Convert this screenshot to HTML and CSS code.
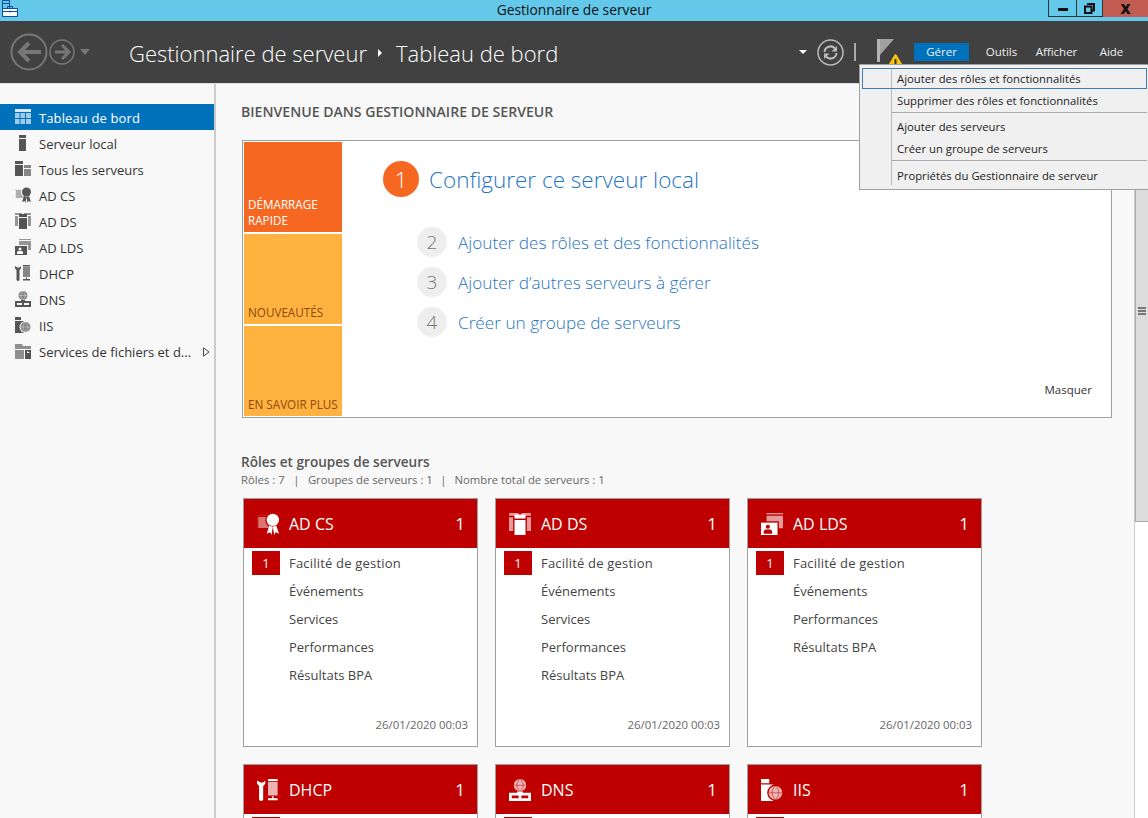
FILE: index.html
```html
<!DOCTYPE html>
<html>

<head>
    <meta charset="UTF-8" />
    <title>Gestionnaire de serveur</title>
    <link rel="stylesheet" href="styles.css">
</head>

<body>
    <svg class="defs" width="0" height="0">
        <symbol id="i-dash" viewBox="0 0 16 16">
            <path d="M0 0h16v3H0z" />
            <path opacity=".75" d="M0 4h4.500v5H0zM5.500 4H10v5H5.500zM11 4h5v5h-5zM0 10h4.500v5H0zM5.500 10H10v5H5.500zM11 10h5v5h-5z" />
        </symbol>
        <symbol id="i-local" viewBox="0 0 16 16">
            <path d="M4 0h7v3H4zM4 4h7v12H4z" />
        </symbol>
        <symbol id="i-all" viewBox="0 0 16 16">
            <path d="M0 0h8v3H0zM0 4h8v11H0z" />
            <path opacity=".7" d="M9 4h7v3H9zM9 8h7v7H9z" />
        </symbol>
        <symbol id="i-adcs" viewBox="0 0 16 16">
            <path opacity=".45" d="M0 2h9v9H0z" />
            <path class="cut-line" d="M.5 2.500h9v9h-9z" />
            <circle class="cut" cx="11.500" cy="5" r="5.500" />
            <circle cx="11.500" cy="5" r="4.500" />
            <path d="M9 9l-2 6 2.500-1 1 2 1-6zM14 9l2 6-2.500-1-1 2-1-6z" />
        </symbol>
        <symbol id="i-adds" viewBox="0 0 16 16">
            <path opacity=".6" d="M0 0h7v2H0zM9 0h7v2H9zM0 3h3v10H0zM13 3h3v10h-3z" />
            <path d="M4 1h8v3H4zM4 5h8v11H4z" />
        </symbol>
        <symbol id="i-adlds" viewBox="0 0 16 16">
            <path opacity=".6" d="M4 2h12v9h-3V6H4z" />
            <path d="M4 0h12v1H4z" opacity=".6" />
            <path d="M0 7h12v9H0z" />
            <circle class="cut" cx="5" cy="10" r="1.500" />
            <path class="cut" d="M2 15v-2l1-1h4l1 1v2z" />
        </symbol>
        <symbol id="i-dhcp" viewBox="0 0 16 16">
            <path d="M0 1v2.500l1.500 1.500V15l1 1h1l1-1V5L6 3.500V1L4.500 2.500h-2z" />
            <path opacity=".7" d="M8 2h7v10H8z" />
            <path d="M8 0h7v1.500H8zM11 12.500h1V14h3v1.500H8V14h3z" />
        </symbol>
        <symbol id="i-dns" viewBox="0 0 16 16">
            <circle opacity=".7" cx="8" cy="4.500" r="4.500" />
            <path class="globe-line" d="M3.500 4.500h9M8 0c-3 2.500-3 6.500 0 9M8 0c3 2.500 3 6.500 0 9" />
            <path d="M6 9h4v1H6zM0 10h16v6H0z" />
            <path class="cut" d="M2 12h5v2H2zM9 12h5v2H9z" />
        </symbol>
        <symbol id="i-iis" viewBox="0 0 16 16">
            <path d="M0 0h6v3H0zM0 4h9v12H0z" />
            <circle class="cut" cx="10.500" cy="10" r="6" />
            <circle opacity=".7" cx="10.500" cy="10" r="5" />
            <path class="globe-line" d="M5.500 10h10M10.500 5c-3.200 3-3.200 7 0 10M10.500 5c3.200 3 3.200 7 0 10" />
        </symbol>
        <symbol id="i-files" viewBox="0 0 16 16">
            <path opacity=".65" d="M0 1h7l1 2h8v3H0zM0 7h9v9H0z" />
            <path d="M10 7h6v9h-6zM12 8v2h3z" />
        </symbol>
    </svg>

    <div class="titlebar">
        <div class="app-icon">
            <svg width="17" height="17" viewBox="0 0 17 17">
                <path d="M1.500.500h7v11h-7z" fill="#63c8ea" stroke="#0b4f9e" />
                <path d="M2 3.500h6" stroke="#0b4f9e" />
                <path d="M1.500 8.500h15v8h-15z" fill="#fff" stroke="#0b4f9e" />
                <path d="M6.500 8V6.500h5V8M2 11.500h14M9 10.500v2" fill="none" stroke="#0b4f9e" />
            </svg>
        </div>
        <div class="title">Gestionnaire de serveur</div>
        <div class="win-btns">
            <div class="win-btn win-min"><span></span></div>
            <div class="win-btn win-max">
                <svg width="11" height="11" viewBox="0 0 11 11">
                    <path d="M3 1h7v6.500H8M1 3.500h6.500V10H1z" fill="none" stroke="#111" stroke-width="2" />
                </svg>
            </div>
            <div class="win-btn win-close">X</div>
        </div>
    </div>

    <div class="toolbar">
        <div class="nav-btns">
            <svg class="nav-back" width="38" height="38" viewBox="0 0 38 38">
                <circle cx="19" cy="19" r="17.500" fill="none" stroke="#777" stroke-width="2" />
                <path d="M9 19h22M19 10l-9 9 9 9" fill="none" stroke="#777" stroke-width="4" />
            </svg>
            <svg class="nav-fwd" width="26" height="26" viewBox="0 0 26 26">
                <circle cx="13" cy="13" r="12" fill="none" stroke="#777" stroke-width="1.500" />
                <path d="M20 13H6M13 6l7 7-7 7" fill="none" stroke="#777" stroke-width="3" />
            </svg>
            <span class="caret caret-grey"></span>
        </div>
        <div class="crumbs">
            <span>Gestionnaire de serveur</span>
            <span class="crumb-sep"></span>
            <span>Tableau de bord</span>
        </div>
        <div class="tools">
            <span class="caret caret-white"></span>
            <svg class="refresh" width="27" height="27" viewBox="0 0 27 27">
                <circle cx="13.500" cy="13.500" r="12.500" fill="none" stroke="#bbb" stroke-width="1.500" />
                <g id="refresh-arc" fill="#bbb">
                    <path d="M7.500 13a6 6 0 0 1 10.500-3.500" fill="none" stroke="#bbb" stroke-width="2" />
                    <path d="M20 7v5.500h-5.500z" />
                </g>
                <use href="#refresh-arc" transform="rotate(180 13.500 13.500)" />
            </svg>
            <span class="tool-sep"></span>
            <svg class="flag" width="28" height="30" viewBox="0 0 28 30">
                <path d="M1 1h3v23H1z" fill="#b4b4b4" />
                <path d="M4 1h14L4 17z" fill="#a0a0a0" />
                <path d="M19.500 17l6 10h-12z" fill="#f9c10e" stroke="#f9c10e" stroke-width="2" stroke-linejoin="round" />
                <path d="M18.500 21h2v5h-2z" fill="#333" />
            </svg>
            <div class="menu-item is-active">Gérer</div>
            <div class="menu-item">Outils</div>
            <div class="menu-item">Afficher</div>
            <div class="menu-item">Aide</div>
        </div>
    </div>

    <div class="main">
        <div class="sidebar">
            <div class="side-item is-active"><svg class="side-icon"><use href="#i-dash" /></svg>Tableau de bord</div>
            <div class="side-item"><svg class="side-icon"><use href="#i-local" /></svg>Serveur local</div>
            <div class="side-item"><svg class="side-icon"><use href="#i-all" /></svg>Tous les serveurs</div>
            <div class="side-item"><svg class="side-icon"><use href="#i-adcs" /></svg>AD CS</div>
            <div class="side-item"><svg class="side-icon"><use href="#i-adds" /></svg>AD DS</div>
            <div class="side-item"><svg class="side-icon"><use href="#i-adlds" /></svg>AD LDS</div>
            <div class="side-item"><svg class="side-icon"><use href="#i-dhcp" /></svg>DHCP</div>
            <div class="side-item"><svg class="side-icon"><use href="#i-dns" /></svg>DNS</div>
            <div class="side-item"><svg class="side-icon"><use href="#i-iis" /></svg>IIS</div>
            <div class="side-item"><svg class="side-icon"><use href="#i-files" /></svg>Services de fichiers et d...
                <svg class="side-arrow" width="7" height="10" viewBox="0 0 7 10">
                    <path d="M.5 .8v8.400L6 5z" fill="none" stroke="#444" />
                </svg>
            </div>
        </div>

        <div class="content">
            <h1 class="welcome">BIENVENUE DANS GESTIONNAIRE DE SERVEUR</h1>

            <div class="start-panel">
                <div class="tiles">
                    <div class="tile tile-orange">DÉMARRAGE<br />RAPIDE</div>
                    <div class="tile tile-amber">NOUVEAUTÉS</div>
                    <div class="tile tile-amber">EN SAVOIR PLUS</div>
                </div>
                <div class="steps">
                    <div class="step-main"><span class="step-num">1</span>Configurer ce serveur local</div>
                    <div class="step-list">
                        <div class="step"><span class="step-num">2</span>Ajouter des rôles et des fonctionnalités</div>
                        <div class="step"><span class="step-num">3</span>Ajouter d’autres serveurs à gérer</div>
                        <div class="step"><span class="step-num">4</span>Créer un groupe de serveurs</div>
                    </div>
                    <div class="hide-link">Masquer</div>
                </div>
            </div>

            <div class="roles-title">Rôles et groupes de serveurs</div>
            <div class="roles-sub">
                <span>Rôles : 7</span><i>|</i><span>Groupes de serveurs : 1</span><i>|</i><span>Nombre total de serveurs : 1</span>
            </div>

            <div class="cards">
                <div class="card">
                    <div class="card-head"><svg class="card-icon"><use href="#i-adcs" /></svg><span>AD CS</span><b>1</b></div>
                    <div class="card-row"><em>1</em>Facilité de gestion</div>
                    <div class="card-row">Événements</div>
                    <div class="card-row">Services</div>
                    <div class="card-row">Performances</div>
                    <div class="card-row">Résultats BPA</div>
                    <div class="card-date">26/01/2020 00:03</div>
                </div>
                <div class="card">
                    <div class="card-head"><svg class="card-icon"><use href="#i-adds" /></svg><span>AD DS</span><b>1</b></div>
                    <div class="card-row"><em>1</em>Facilité de gestion</div>
                    <div class="card-row">Événements</div>
                    <div class="card-row">Services</div>
                    <div class="card-row">Performances</div>
                    <div class="card-row">Résultats BPA</div>
                    <div class="card-date">26/01/2020 00:03</div>
                </div>
                <div class="card">
                    <div class="card-head"><svg class="card-icon"><use href="#i-adlds" /></svg><span>AD LDS</span><b>1</b></div>
                    <div class="card-row"><em>1</em>Facilité de gestion</div>
                    <div class="card-row">Événements</div>
                    <div class="card-row">Performances</div>
                    <div class="card-row">Résultats BPA</div>
                    <div class="card-date">26/01/2020 00:03</div>
                </div>
                <div class="card">
                    <div class="card-head"><svg class="card-icon"><use href="#i-dhcp" /></svg><span>DHCP</span><b>1</b></div>
                    <div class="card-row"><em></em></div>
                </div>
                <div class="card">
                    <div class="card-head"><svg class="card-icon"><use href="#i-dns" /></svg><span>DNS</span><b>1</b></div>
                    <div class="card-row"><em></em></div>
                </div>
                <div class="card">
                    <div class="card-head"><svg class="card-icon"><use href="#i-iis" /></svg><span>IIS</span><b>1</b></div>
                    <div class="card-row"><em></em></div>
                </div>
            </div>
        </div>

        <div class="scrollbar">
            <div class="thumb"><span class="grip"></span></div>
        </div>
    </div>

    <div class="dropdown">
        <div class="drop-item is-focus">Ajouter des rôles et fonctionnalités</div>
        <div class="drop-item">Supprimer des rôles et fonctionnalités</div>
        <div class="drop-line"></div>
        <div class="drop-item">Ajouter des serveurs</div>
        <div class="drop-item">Créer un groupe de serveurs</div>
        <div class="drop-line drop-line-last"></div>
        <div class="drop-item">Propriétés du Gestionnaire de serveur</div>
    </div>
</body>

</html>
```
FILE: styles.css
```css
* {
    box-sizing: border-box;
}

html, body {
    margin: 0;
    height: 818px;
    overflow: hidden;
}

body {
    font-family: "Open Sans", "Noto Sans", sans-serif;
    font-size: 13px;
    color: #333;
    background-color: #f8f8f8;
}

.defs {
    position: absolute;
}

/* title bar */
.titlebar {
    display: grid;
    grid-template-columns: 1fr auto 1fr;
    height: 21px;
    background-color: #63c8ea;
}

.app-icon {
    height: 17px;
    padding-left: 1px;
}

.title {
    font-size: 13.800px;
    line-height: 19px;
    color: #111;
}

.win-btns {
    display: flex;
    justify-content: flex-end;
    align-items: flex-start;
}

.win-btn {
    display: flex;
    align-items: center;
    justify-content: center;
    height: 17px;
    border: 1px solid #333;
    border-top: 0;
}

.win-min {
    width: 29px;
}

.win-min span {
    width: 10px;
    height: 3px;
    margin-top: 3px;
    background-color: #111;
}

.win-max {
    width: 26px;
    border-left: 0;
}

.win-close {
    width: 45px;
    border: 0;
    background-color: #c25b52;
    font-weight: 800;
    font-size: 14px;
    color: #111;
}

/* toolbar */
.toolbar {
    position: relative;
    display: flex;
    align-items: center;
    height: 62px;
    background-color: #414141;
    color: #fff;
}

.nav-btns {
    display: flex;
    align-items: center;
    width: 129px;
    padding-left: 10px;
}

.nav-fwd {
    margin-left: 1px;
}

.caret {
    width: 0;
    height: 0;
    border-left: 5px solid transparent;
    border-right: 5px solid transparent;
    border-top: 6px solid #777;
}

.caret-grey {
    margin-left: 5px;
}

.caret-white {
    border-top-color: #fff;
    border-left-width: 4px;
    border-right-width: 4px;
    border-top-width: 4px;
    margin-right: 10px;
}

.crumbs {
    display: flex;
    align-items: center;
    margin-top: 2px;
    font-size: 22px;
    font-weight: 300;
    color: #fff;
}

.crumb-sep {
    width: 0;
    height: 0;
    margin: 0 14px 0 11px;
    border-left: 4px solid #fff;
    border-top: 4px solid transparent;
    border-bottom: 4px solid transparent;
}

.tools {
    display: flex;
    align-items: center;
    margin-left: auto;
    padding-right: 9px;
}

.refresh {
    margin-right: 10px;
}

.tool-sep {
    width: 2px;
    height: 18px;
    margin-right: 20px;
    background-color: #aaa;
}

.flag {
    margin: 2px 10px 0 0;
}

.menu-item {
    width: 55px;
    height: 18px;
    font-size: 11.500px;
    line-height: 18px;
    text-align: center;
    color: #eee;
}

.menu-item.is-active {
    margin-right: 5px;
    background-color: #0072bc;
}

/* page body */
.main {
    display: flex;
    height: 735px;
    border-top: 1px solid #ddd;
}

.sidebar {
    width: 216px;
    flex-shrink: 0;
    padding-top: 20px;
    border-right: 2px solid #ccc;
    background-color: #f8f8f8;
}

.side-item {
    position: relative;
    display: flex;
    align-items: center;
    height: 26px;
    padding: 2px 0 0 15px;
    font-size: 13px;
    color: #333;
}

.side-item.is-active {
    background-color: #0072bc;
    color: #fff;
    letter-spacing: .12px;
}

.side-icon {
    width: 16px;
    height: 16px;
    margin: -2px 8px 0 0;
    fill: #555;
    color: #555;
    --cut: #f8f8f8;
}

.is-active .side-icon {
    fill: #d8e9f5;
    color: #d8e9f5;
    --cut: #0072bc;
}

.cut {
    fill: var(--cut);
}

.cut-line {
    fill: none;
    stroke: var(--cut);
    stroke-width: .8;
}

.globe-line {
    fill: none;
    stroke: var(--cut);
    stroke-width: .7;
    opacity: .5;
}

.side-arrow {
    position: absolute;
    top: 9px;
    left: 203px;
}

.content {
    flex: 1;
    min-width: 0;
    padding: 19px 0 0 25px;
    overflow: hidden;
}

.welcome {
    margin: 0 0 19px;
    font-size: 14.100px;
    line-height: 18px;
    font-weight: 600;
    color: #555;
}

.start-panel {
    display: flex;
    width: 870px;
    height: 278px;
    margin-left: 1px;
    padding: 1px;
    border: 1px solid #a0a0a0;
    background-color: #fff;
}

.tiles {
    display: flex;
    flex-direction: column;
    gap: 2px;
    width: 98px;
    flex-shrink: 0;
}

.tile {
    display: flex;
    flex: 1;
    align-items: flex-end;
    padding: 0 4px 4px;
    font-size: 11.700px;
    line-height: 16px;
    white-space: nowrap;
}

.tile-orange {
    background-color: #f66722;
    color: #fff;
}

.tile-amber {
    background-color: #ffb23f;
    color: #8a4a10;
}

.steps {
    position: relative;
    flex: 1;
    padding: 19px 0 0 41px;
}

.step-main {
    display: flex;
    align-items: center;
    font-size: 22.500px;
    font-weight: 300;
    color: #1f76c4;
}

.step-main .step-num {
    width: 36px;
    height: 36px;
    margin-right: 10px;
    background-color: #f66722;
    color: #fff;
    font-size: 22px;
}

.step-list {
    display: flex;
    flex-direction: column;
    gap: 10px;
    margin: 30px 0 0 34px;
}

.step {
    display: flex;
    align-items: center;
    font-size: 17.200px;
    font-weight: 300;
    color: #1f76c4;
}

.step-num {
    display: flex;
    flex-shrink: 0;
    align-items: center;
    justify-content: center;
    width: 30px;
    height: 30px;
    margin-right: 11px;
    border-radius: 50%;
    background-color: #eee;
    color: #777;
    font-size: 19px;
    font-weight: 300;
}

.hide-link {
    position: absolute;
    right: 18px;
    bottom: 19px;
    font-size: 11.500px;
    color: #333;
}

.roles-title {
    margin-top: 35px;
    font-size: 13.600px;
    line-height: 18px;
    font-weight: 600;
    color: #555;
}

.roles-sub {
    display: flex;
    font-size: 11.300px;
    line-height: 17px;
    color: #666;
}

.roles-sub i {
    margin: 0 8.500px;
    font-style: normal;
}

.roles-sub i:last-of-type {
    margin: 0 8px 0 7.500px;
}

.cards {
    display: grid;
    grid-template-columns: repeat(3, 235px);
    gap: 17px;
    margin: 10px 0 0 2px;
}

.card {
    display: flex;
    flex-direction: column;
    height: 249px;
    border: 1px solid #a0a0a0;
    background-color: #fff;
    color: #444;
}

.card-head {
    display: flex;
    align-items: center;
    height: 49px;
    flex-shrink: 0;
    padding: 0 12px 0 13px;
    background-color: #bf0000;
    color: #fff;
    font-size: 16px;
}

.card-head b {
    margin-left: auto;
    font-weight: 400;
    font-size: 17px;
}

.card-icon {
    width: 22px;
    height: 22px;
    margin-right: 10px;
    fill: #fff;
    color: #fff;
    --cut: #bf0000;
}

.card-row {
    position: relative;
    height: 28px;
    padding-left: 45px;
    font-size: 13px;
    line-height: 28px;
}

.card-head + .card-row {
    margin-top: 1px;
    letter-spacing: .2px;
}

.card-row em {
    position: absolute;
    top: 2px;
    left: 8px;
    width: 28px;
    height: 24px;
    background-color: #bf0000;
    color: #fff;
    font-style: normal;
    line-height: 24px;
    text-align: center;
}

.card-date {
    margin-top: auto;
    padding: 0 9px 13px 0;
    font-size: 11.400px;
    line-height: 16px;
    text-align: right;
    color: #666;
}

/* scrollbar */
.scrollbar {
    width: 14px;
    flex-shrink: 0;
    padding-top: 18px;
    background-color: #fff;
    border-left: 1px solid #ccc;
}

.thumb {
    display: flex;
    align-items: center;
    justify-content: center;
    height: 420px;
    border-left: 1px solid #aaa;
    border-bottom: 1px solid #aaa;
    background-color: #dcdcdc;
}

.grip {
    width: 8px;
    height: 9px;
    background: repeating-linear-gradient(#777 0 2px, transparent 2px 3px);
}

/* Gérer dropdown */
.dropdown {
    position: absolute;
    top: 64px;
    left: 859px;
    width: 289px;
    height: 126px;
    padding: 3px 1px 0 2px;
    border: 1px solid #a0a0a0;
    border-right: 0;
    background-color: #f0f0f0;
    background-image: linear-gradient(#bbb, #bbb);
    background-size: 1px 116px;
    background-position: 31px 4px;
    background-repeat: no-repeat;
}

.drop-item {
    height: 21px;
    margin-bottom: 1px;
    padding-left: 34px;
    border: 1px solid transparent;
    font-size: 11.300px;
    line-height: 19px;
    color: #222;
}

.drop-item.is-focus {
    border-color: #3d7fb5;
}

.drop-line {
    height: 1px;
    margin: 1px 0 3px 30px;
    background-color: #aaa;
}

.drop-line-last {
    margin-bottom: 4px;
}
```
